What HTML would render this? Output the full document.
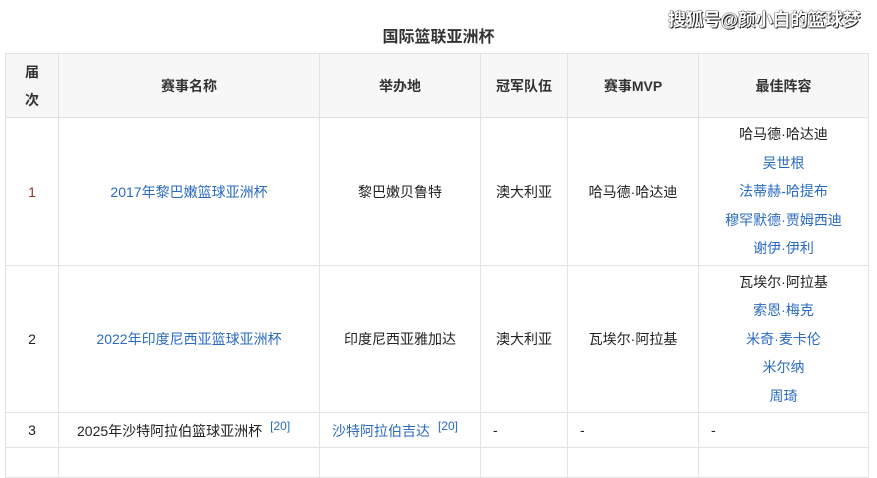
<!DOCTYPE html><html><head><meta charset="utf-8"><style>
body{margin:0;background:#fff;font-family:"Liberation Sans","Noto Sans CJK SC",sans-serif;font-size:14px;color:#222;width:877px;height:454px;overflow:hidden;position:relative}
.t{position:absolute;left:0;top:23px;width:877px;text-align:center;font-weight:bold;font-size:16px;color:#333}
.wm{position:absolute;left:668px;top:6px;font-size:18px;font-weight:bold;color:#fff;text-shadow:0 0 1px #000,0 0 1px #000,1px 1px 0 #333;letter-spacing:-0.5px}
table{position:absolute;left:5px;top:53px;border-collapse:collapse;width:864px}
td,th{border:1px solid #e2e2e2;text-align:center;padding:0}
th{background:#f7f7f7;font-weight:bold;color:#333;height:63px;font-size:14px}
a{color:#2a6bbf;text-decoration:none}
.l{line-height:28.5px}
sup{font-size:12px;color:#2a6bbf;vertical-align:6px;margin-left:8px}
</style></head><body>
<div class="wm">搜狐号@颜小白的篮球梦</div>
<div class="t">国际篮联亚洲杯</div>
<table>
<tr><th style="width:52px;line-height:28px">届<br>次</th><th style="width:260px">赛事名称</th><th style="width:160px">举办地</th><th style="width:86px">冠军队伍</th><th style="width:130px">赛事MVP</th><th>最佳阵容</th></tr>
<tr style="height:148px"><td style="color:#8b3a2a">1</td><td><a>2017年黎巴嫩篮球亚洲杯</a></td><td>黎巴嫩贝鲁特</td><td>澳大利亚</td><td>哈马德·哈达迪</td><td class="l">哈马德·哈达迪<br><a>吴世根</a><br><a>法蒂赫-哈提布</a><br><a>穆罕默德·贾姆西迪</a><br><a>谢伊·伊利</a></td></tr>
<tr style="height:147px"><td>2</td><td><a>2022年印度尼西亚篮球亚洲杯</a></td><td>印度尼西亚雅加达</td><td>澳大利亚</td><td>瓦埃尔·阿拉基</td><td class="l">瓦埃尔·阿拉基<br><a>索恩·梅克</a><br><a>米奇·麦卡伦</a><br><a>米尔纳</a><br><a>周琦</a></td></tr>
<tr style="height:35px"><td>3</td><td style="text-align:left;padding-left:18px">2025年沙特阿拉伯篮球亚洲杯<sup>[20]</sup></td><td style="text-align:left;padding-left:12px"><a>沙特阿拉伯吉达</a><sup>[20]</sup></td><td style="text-align:left;padding-left:12px">-</td><td style="text-align:left;padding-left:12px">-</td><td style="text-align:left;padding-left:12px">-</td></tr>
<tr style="height:30px"><td></td><td></td><td></td><td></td><td></td><td></td></tr>
</table>
</body></html>
